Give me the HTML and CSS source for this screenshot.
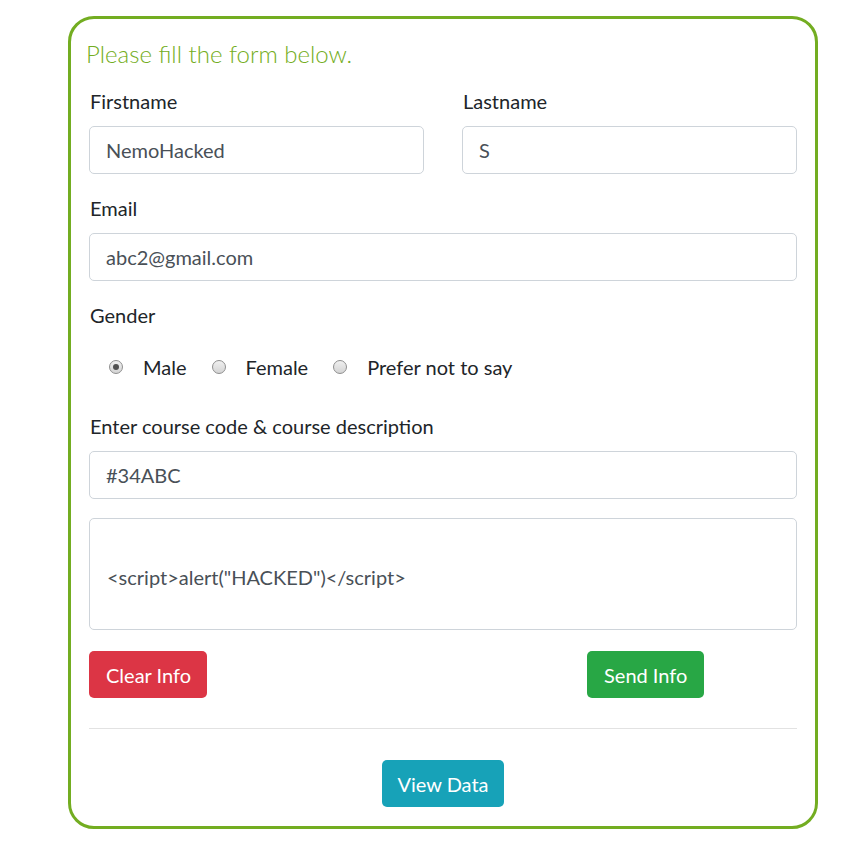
FILE: index.html
```html
<!DOCTYPE html>
<html lang="en">
<head>
<meta charset="utf-8">
<title>Form</title>
<link rel="stylesheet" href="styles.css">
</head>
<body>
<div class="card">
  <h4 class="title">Please fill the form below.</h4>
  <form class="form">
    <div class="row">
      <div class="group">
        <label class="label">Firstname</label>
        <input class="control" type="text" value="NemoHacked">
      </div>
      <div class="group">
        <label class="label">Lastname</label>
        <input class="control" type="text" value="S">
      </div>
    </div>
    <div class="group">
      <label class="label">Email</label>
      <input class="control" type="text" value="abc2@gmail.com">
    </div>
    <div class="group">
      <label class="label">Gender</label>
      <div class="radios">
        <span class="radio-item"><span class="radio checked"></span><span class="radio-text">Male</span></span>
        <span class="radio-item"><span class="radio"></span><span class="radio-text">Female</span></span>
        <span class="radio-item"><span class="radio"></span><span class="radio-text">Prefer not to say</span></span>
      </div>
    </div>
    <div class="group group-tight">
      <label class="label">Enter course code &amp; course description</label>
      <input class="control" type="text" value="#34ABC">
    </div>
    <div class="area">&lt;script&gt;alert("HACKED")&lt;/script&gt;</div>
    <div class="actions">
      <button type="button" class="btn btn-red">Clear Info</button>
      <button type="button" class="btn btn-green">Send Info</button>
    </div>
    <hr class="rule">
    <div class="center">
      <button type="button" class="btn btn-teal">View Data</button>
    </div>
  </form>
</div>
</body>
</html>
```

FILE: styles.css
```css
html, body {
  margin: 0;
  padding: 0;
  background: #fff;
}
body {
  font-family: Lato, "Open Sans", sans-serif;
  color: #212529;
}
.card {
  box-sizing: border-box;
  width: 750px;
  margin: 16px 0 0 68px;
  border: 3px solid #73ad21;
  border-radius: 26px;
  padding: 19px 18px 19px 18px;
}
.title {
  margin: 0 0 17px -3px;
  font-weight: 300;
  font-size: 24px;
  line-height: 32px;
  color: #73ad21;
}
.form {
  margin: 0;
}
.row {
  display: grid;
  grid-template-columns: 1fr 1fr;
  column-gap: 38px;
}
.group {
  margin-bottom: 20px;
}
.group-tight {
  margin-bottom: 19px;
}
.label {
  display: block;
  font-size: 20px;
  line-height: 28px;
  margin-bottom: 11px;
  padding-left: 1px;
}
.control {
  display: block;
  box-sizing: border-box;
  width: 100%;
  height: 48px;
  margin: 0;
  padding: 0 16px;
  font-family: inherit;
  font-size: 20px;
  color: #495057;
  border: 1px solid #ced4da;
  border-radius: 5px;
  background: #fff;
}
.radios {
  display: flex;
  align-items: center;
  height: 30px;
  margin-top: 23px;
  padding-left: 20px;
  margin-bottom: 30px;
}
.radio-item {
  display: inline-flex;
  align-items: center;
  margin-right: 25px;
}
.radio {
  box-sizing: border-box;
  width: 14px;
  height: 14px;
  border-radius: 50%;
  border: 1px solid #8f8f8f;
  background: linear-gradient(#f0f0f0, #d4d4d4);
  margin-right: 20px;
  position: relative;
}
.radio.checked::after {
  content: "";
  position: absolute;
  left: 3px;
  top: 3px;
  width: 6px;
  height: 6px;
  border-radius: 50%;
  background: #505050;
}
.radio-text {
  font-size: 20px;
  line-height: 30px;
}
.area {
  box-sizing: border-box;
  height: 112px;
  border: 1px solid #ced4da;
  border-radius: 5px;
  padding: 43px 17px 0 17px;
  font-size: 20px;
  line-height: 30px;
  color: #495057;
  margin-bottom: 21px;
}
.actions {
  display: flex;
}
.btn {
  box-sizing: border-box;
  height: 47px;
  font-family: inherit;
  font-size: 20px;
  line-height: 30px;
  padding: 0 16px;
  border: 1px solid transparent;
  border-radius: 5px;
  color: #fff;
  cursor: pointer;
}
.btn-red {
  background: #dc3545;
  padding: 0 15px 0 16px;
}
.btn-green {
  background: #28a745;
  margin-left: 380px;
}
.btn-teal {
  background: #17a2b8;
  padding: 0 14px;
}
.rule {
  border: 0;
  border-top: 1px solid #e2e2e2;
  margin: 30px 0 31px 0;
}
.center {
  display: flex;
  justify-content: center;
}
```
